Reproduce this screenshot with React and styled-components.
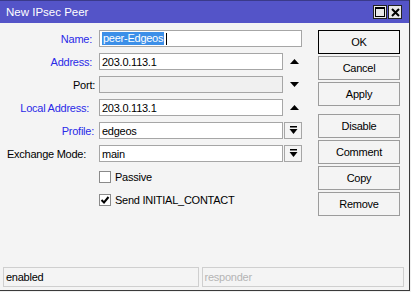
import React from "react";
import styled, { createGlobalStyle } from "styled-components";

const GlobalStyle = createGlobalStyle`
  html, body {
    margin: 0;
    padding: 0;
    background: #f0f0f0;
  }
  * {
    box-sizing: border-box;
  }
`;

const Window = styled.div`
  width: 410px;
  height: 291px;
  display: flex;
  flex-direction: column;
  background: #f4f4f4;
  border-right: 1px solid #3a3a3a;
  border-bottom: 1px solid #3a3a3a;
  font-family: "Liberation Sans", Arial, sans-serif;
  font-size: 11px;
  letter-spacing: -0.25px;
  color: #000;
`;

const TitleBar = styled.div`
  height: 23px;
  display: flex;
  align-items: center;
  justify-content: space-between;
  padding: 0 7px 0 6px;
  background: #5454c8;
  border-top: 1px solid #3a3a8a;
`;

const Title = styled.span`
  color: #fff;
  font-size: 11.5px;
  letter-spacing: 0;
`;

const WinButtons = styled.div`
  display: flex;
  gap: 1px;
`;

const WinButton = styled.div`
  width: 14px;
  height: 14px;
  display: flex;
  align-items: center;
  justify-content: center;
  background: #e8e8e8;
  border: 1px solid #222;
`;

const Body = styled.div`
  flex: 1;
  display: flex;
  padding: 7px 0 0 0;
`;

const Form = styled.div`
  width: 318px;
  display: grid;
  grid-template-columns: 99px 1fr;
  grid-auto-rows: 17px;
  row-gap: 6px;
  align-items: center;
`;

const Label = styled.label`
  justify-self: end;
  padding-right: ${(p) => p.$pad}px;
  color: ${(p) => (p.$link ? "#2a2ae8" : "#000")};
  white-space: nowrap;
`;

const Field = styled.div`
  display: flex;
  align-items: center;
  height: 17px;
`;

const Input = styled.div`
  width: ${(p) => p.$w}px;
  height: 17px;
  display: flex;
  align-items: center;
  padding-left: 2px;
  background: ${(p) => (p.$disabled ? "#f0f0f0" : "#fff")};
  border: 1px solid #a6a6a6;
  white-space: nowrap;
`;

const Selected = styled.span`
  background: #3c8fe8;
  color: #fff;
  padding: 0 1px 1px 1px;
`;

const Caret = styled.span`
  display: inline-block;
  width: 1px;
  height: 12px;
  margin-left: 2px;
  background: #000;
`;

const ArrowSlot = styled.div`
  width: 19px;
  height: 17px;
  display: flex;
  align-items: center;
  justify-content: center;
  padding-left: 3px;
`;

const DropButton = styled.div`
  width: 18px;
  height: 17px;
  margin-left: 1px;
  display: flex;
  align-items: center;
  justify-content: center;
  border: 1px solid #a6a6a6;
  background: #f4f4f4;
`;

const CheckRow = styled.div`
  grid-column: 2;
  display: flex;
  align-items: center;
  gap: 4px;
`;

const Box = styled.div`
  width: 12px;
  height: 12px;
  display: flex;
  align-items: center;
  justify-content: center;
  background: #fff;
  border: 1px solid #8a8a8a;
`;

const Buttons = styled.div`
  display: flex;
  flex-direction: column;
  gap: 2px;
  width: 82px;
`;

const Button = styled.div`
  height: 24px;
  display: flex;
  align-items: center;
  justify-content: center;
  border: 1px solid ${(p) => (p.$default ? "#000" : "#9c9c9c")};
  background: #f4f4f4;
  margin-top: ${(p) => (p.$gapTop ? 6 : 0)}px;
`;

const StatusBar = styled.div`
  display: flex;
  gap: 3px;
  padding: 0 5px 3px 3px;
`;

const StatusField = styled.div`
  flex: ${(p) => p.$grow};
  height: 20px;
  display: flex;
  align-items: center;
  padding-left: 2px;
  border: 1px solid #cfcfcf;
  color: ${(p) => (p.$dim ? "#b4b4b4" : "#000")};
`;

const Up = () => (
  <svg width="9" height="6" viewBox="0 0 9 6">
    <polygon points="0,5 9,5 4.5,0" fill="#000" />
  </svg>
);

const Down = () => (
  <svg width="9" height="6" viewBox="0 0 9 6">
    <polygon points="0,0 9,0 4.5,5" fill="#000" />
  </svg>
);

const DropIcon = () => (
  <svg width="9" height="9" viewBox="0 0 9 9">
    <rect x="1" y="0" width="7" height="1.5" fill="#000" />
    <polygon points="0.5,3 8.5,3 4.5,8" fill="#000" />
  </svg>
);

const Tick = () => (
  <svg width="10" height="10" viewBox="0 0 10 10">
    <polyline points="1.5,5 4,7.5 8.5,2" fill="none" stroke="#000" strokeWidth="2" />
  </svg>
);

export default function App() {
  return (
    <>
      <GlobalStyle />
      <Window>
        <TitleBar>
          <Title>New IPsec Peer</Title>
          <WinButtons>
            <WinButton>
              <svg width="10" height="10" viewBox="0 0 10 10">
                <rect x="0.5" y="0.5" width="9" height="9" fill="none" stroke="#000" />
                <rect x="0.5" y="0.5" width="9" height="1.5" fill="#000" />
              </svg>
            </WinButton>
            <WinButton>
              <svg width="9" height="9" viewBox="0 0 9 9">
                <path d="M1 1 L8 8 M8 1 L1 8" stroke="#000" strokeWidth="2" />
              </svg>
            </WinButton>
          </WinButtons>
        </TitleBar>
        <Body>
          <Form>
            <Label $link $pad={7}>Name:</Label>
            <Field>
              <Input $w={203}>
                <Selected>peer-Edgeos</Selected>
                <Caret />
              </Input>
            </Field>

            <Label $link $pad={7}>Address:</Label>
            <Field>
              <Input $w={184}>203.0.113.1</Input>
              <ArrowSlot><Up /></ArrowSlot>
            </Field>

            <Label $pad={4}>Port:</Label>
            <Field>
              <Input $w={184} $disabled />
              <ArrowSlot><Down /></ArrowSlot>
            </Field>

            <Label $link $pad={10}>Local Address:</Label>
            <Field>
              <Input $w={184}>203.0.113.1</Input>
              <ArrowSlot><Up /></ArrowSlot>
            </Field>

            <Label $link $pad={5}>Profile:</Label>
            <Field>
              <Input $w={184}>edgeos</Input>
              <DropButton><DropIcon /></DropButton>
            </Field>

            <Label $pad={13}>Exchange Mode:</Label>
            <Field>
              <Input $w={184}>main</Input>
              <DropButton><DropIcon /></DropButton>
            </Field>

            <CheckRow>
              <Box />
              <span>Passive</span>
            </CheckRow>

            <CheckRow>
              <Box><Tick /></Box>
              <span>Send INITIAL_CONTACT</span>
            </CheckRow>
          </Form>
          <Buttons>
            <Button $default>OK</Button>
            <Button>Cancel</Button>
            <Button>Apply</Button>
            <Button $gapTop>Disable</Button>
            <Button>Comment</Button>
            <Button>Copy</Button>
            <Button>Remove</Button>
          </Buttons>
        </Body>
        <StatusBar>
          <StatusField $grow={196}>enabled</StatusField>
          <StatusField $grow={203} $dim>responder</StatusField>
        </StatusBar>
      </Window>
    </>
  );
}
